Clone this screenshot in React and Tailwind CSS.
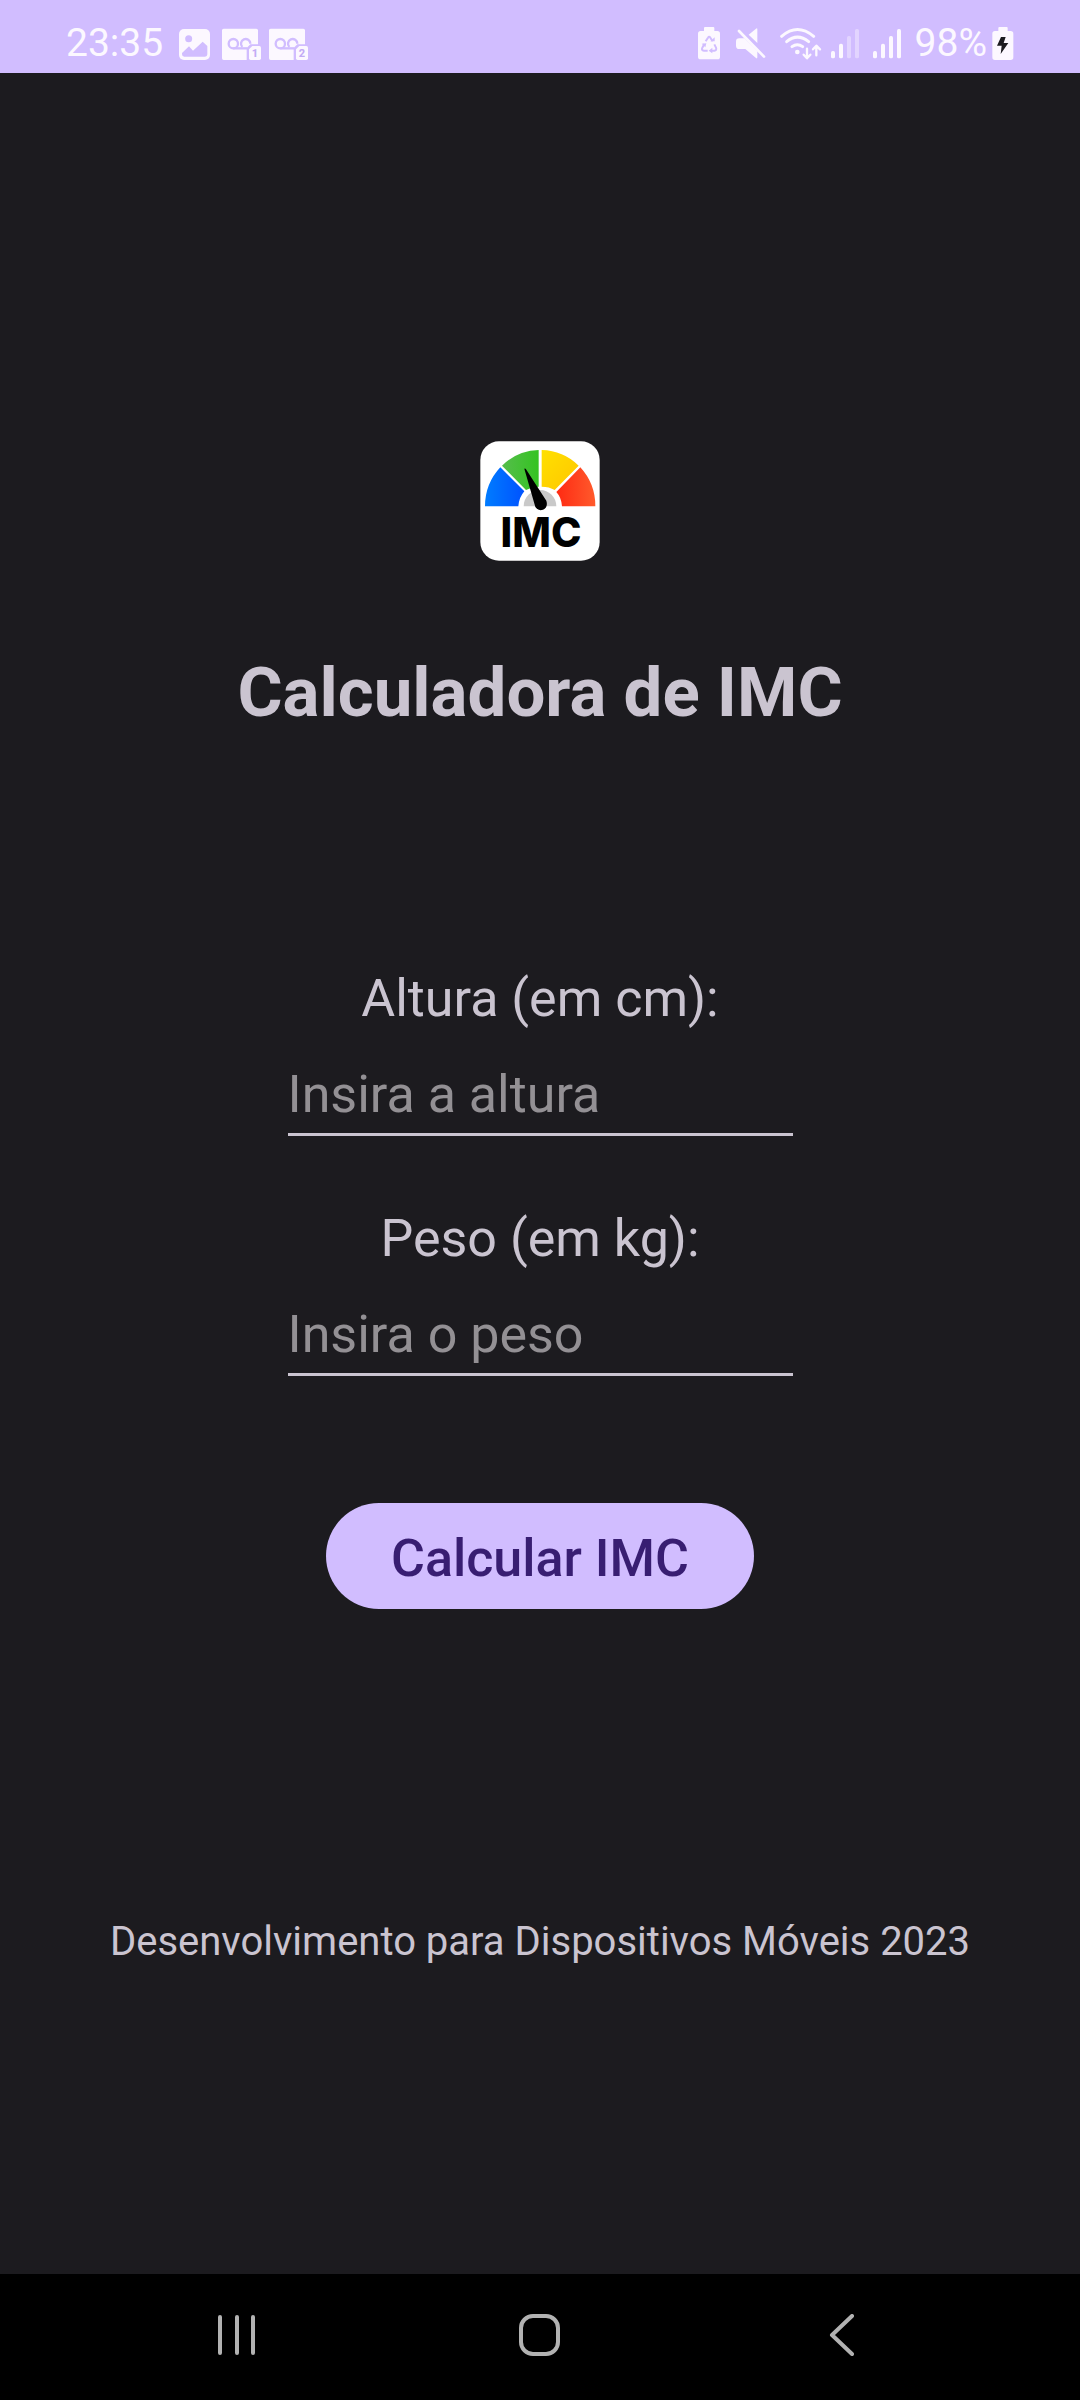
const FG = "#fcf8ff";
const BAR = "#d1bdff";

function PictureIcon() {
  return (
    <svg width="31" height="34" viewBox="387 81 93 102" aria-hidden="true">
      <rect x="387" y="87" width="93" height="93" rx="15" fill={FG} />
      <circle cx="416" cy="116" r="10.5" fill={BAR} />
      <path d="M396 159l21-20 12 13 29-27 14 13v25q0 7-7 7h-62q-7 0-7-7z" fill={BAR} />
    </svg>
  );
}

function VoicemailIcon({ line }) {
  return (
    <svg width="39" height="34" viewBox="516 81 117 102" aria-hidden="true">
      <path d="M521 86h98q5 0 5 5v42h-23l-11 11v36h-69q-5 0-5-5v-84q0-5 5-5z" fill={FG} />
      <g fill="none" stroke={BAR} strokeWidth="7">
        <circle cx="550" cy="131" r="14" />
        <path d="M550 145h42" />
        <path d="M577 141a14 14 0 1 1 24-10" />
      </g>
      <path d="M607 138h21q5 0 5 5v32q0 5-5 5h-26q-5 0-5-5v-27z" fill={FG} />
      <text x="615" y="171" textAnchor="middle" fontFamily="Roboto, sans-serif" fontWeight="800" fontSize="33" fill="#c3abf5">
        {line}
      </text>
    </svg>
  );
}

function RecycleBatteryIcon() {
  return (
    <svg width="22" height="34" viewBox="51 81 66 102" aria-hidden="true">
      <path d="M72 81h25q3 0 3 3v9h9q8 0 8 8v69q0 8-8 8H59q-8 0-8-8v-69q0-8 8-8h10v-9q0-3 3-3z" fill={FG} />
      <g fill="none" stroke={BAR} strokeWidth="6" strokeLinejoin="round">
        <path d="M74 124l7-11q3-5 7 0l7 11" />
        <path d="M100 133l5 10q3 8-5 9h-9" />
        <path d="M80 152H69q-9-1-5-9l6-11" />
      </g>
      <path d="M88 124h13v-12zM94 143v17l-11-8zM62 131l14-1-3 12z" fill={BAR} />
    </svg>
  );
}

function MuteIcon() {
  return (
    <svg width="30" height="34" viewBox="168 81 90 102" aria-hidden="true">
      <path d="M232 88v41l-26-25 22-18q4-3 4 2zM178 115h15l39 38v19q0 5-4 2l-32-27h-18q-10 0-10-10v-12q0-10 10-10z" fill={FG} />
      <path d="M177 93l75 77" stroke={FG} strokeWidth="8" strokeLinecap="round" />
    </svg>
  );
}

function WifiIcon() {
  return (
    <svg width="42" height="34" viewBox="298 81 126 102" aria-hidden="true">
      <g fill="none" stroke={FG} strokeWidth="9" strokeLinecap="round">
        <path d="M303 109q47-41 96 0" />
        <path d="M318 125q32-27 66 0" />
        <path d="M334 140q16-12 32 0" />
      </g>
      <circle cx="350" cy="156" r="7" fill={FG} />
      <g fill="none" stroke={FG} strokeWidth="7" strokeLinecap="round" strokeLinejoin="round">
        <path d="M379 146v28M369 164l10 11 10-11" />
        <path d="M407 166v-28M397 148l10-11 11 11" />
      </g>
    </svg>
  );
}

function SignalIcon({ weak }) {
  return (
    <svg width="28" height="34" viewBox="450 81 84 102" aria-hidden="true">
      <g fill={FG}>
        <rect x="450" y="153" width="12" height="22" rx="5" />
        <rect x="474" y="131" width="12" height="44" rx="5" />
        <rect x="498" y="108" width="12" height="67" rx="5" opacity={weak ? 0.4 : 1} />
        <rect x="522" y="87" width="12" height="88" rx="5" opacity={weak ? 0.4 : 1} />
      </g>
    </svg>
  );
}

function ChargingIcon() {
  return (
    <svg width="22" height="34" viewBox="428 81 66 102" aria-hidden="true">
      <path d="M450 81h22q3 0 3 3v9h9q8 0 8 8v71q0 8-8 8h-47q-8 0-8-8v-71q0-8 8-8h10v-9q0-3 3-3z" fill={FG} />
      <path d="M455 111h14l-6 18h14l-23 33 3-25h-14z" fill="#1c1b20" />
    </svg>
  );
}

function Logo() {
  return (
    <svg width="120" height="120" viewBox="30 33 360 360" role="img" aria-label="IMC">
      <defs>
        <linearGradient id="blue" x1="0" x2="1"><stop stopColor="#007cff" /><stop offset="1" stopColor="#0052ff" /></linearGradient>
        <linearGradient id="green" x1="0" x2="1"><stop stopColor="#56bd4c" /><stop offset="1" stopColor="#34c321" /></linearGradient>
        <linearGradient id="yellow" x1="0" x2="1" y2="1"><stop stopColor="#ffe000" /><stop offset="1" stopColor="#ffc600" /></linearGradient>
        <linearGradient id="red" x1="0" x2="1"><stop stopColor="#ff2a12" /><stop offset="1" stopColor="#ff5a2c" /></linearGradient>
      </defs>
      <rect x="31" y="34" width="358" height="358" rx="56" fill="#fff" />
      <path d="M45 229A165 169 0 0 1 91 112L163 184Q147 202 145 229Z" fill="url(#blue)" />
      <path d="M96 107A165 169 0 0 1 206 60V170Q184 171 168 180Z" fill="url(#green)" />
      <path d="M215 60A165 169 0 0 1 326 107L254 180Q238 170 215 170Z" fill="url(#yellow)" />
      <path d="M331 112A165 169 0 0 1 376 229H276Q274 202 259 186Z" fill="url(#red)" />
      <path d="M161 229a49 49 0 0 1 98 0z" fill="#c9c9c9" />
      <path d="M163 116q3-2 5 2l61 94q6 20-10 27-14 5-23-8z" fill="#000" />
      <text x="213" y="352" textAnchor="middle" fontFamily="Inter, sans-serif" fontWeight="800" fontSize="123" fill="#000">
        IMC
      </text>
    </svg>
  );
}

function StatusBar() {
  return (
    <header className="flex h-[73px] items-end justify-between bg-[#d1bdff] px-[66px] pb-3 text-[#fcf8ff]">
      <div className="flex items-end">
        <time className="text-[39px] leading-9">23:35</time>
        <div className="ml-4 flex gap-2">
          <PictureIcon />
          <div className="ml-1 flex gap-2">
            <VoicemailIcon line="1" />
            <VoicemailIcon line="2" />
          </div>
        </div>
      </div>
      <div className="flex items-end">
        <div className="flex gap-4">
          <RecycleBatteryIcon />
          <MuteIcon />
        </div>
        <div className="ml-[14px]">
          <WifiIcon />
        </div>
        <div className="ml-[9px] flex gap-[14px]">
          <SignalIcon weak />
          <SignalIcon />
        </div>
        <span className="ml-[14px] text-[39px] leading-9">98%</span>
        <div className="ml-[5px]">
          <ChargingIcon />
        </div>
      </div>
    </header>
  );
}

function Field({ id, label, placeholder }) {
  return (
    <div className="flex w-[505px] max-w-full flex-col items-center gap-[34px]">
      <label htmlFor={id} className="text-[52px] leading-[62px]">{label}</label>
      <input
        id={id}
        inputMode="decimal"
        placeholder={placeholder}
        className="h-[72px] w-full border-b-[3px] border-[#cac4d0] bg-transparent pb-[9px] text-[52px] leading-[60px] outline-none placeholder:text-[#939094]"
      />
    </div>
  );
}

function NavBar() {
  return (
    <nav className="flex h-[126px] items-center justify-between bg-black px-[20%] pb-1">
      <button type="button" aria-label="Recentes">
        <svg width="42" height="42" viewBox="0 0 42 42" fill="none" stroke="#b2b2b2" strokeWidth="4" strokeLinecap="round">
          <path d="M4 3v36M21 3v36M37 3v36" />
        </svg>
      </button>
      <button type="button" aria-label="Início">
        <svg width="42" height="42" viewBox="0 0 42 42" fill="none" stroke="#b2b2b2" strokeWidth="4">
          <rect x="2" y="2" width="37" height="38" rx="12" />
        </svg>
      </button>
      <button type="button" aria-label="Voltar">
        <svg width="42" height="42" viewBox="0 0 42 42" fill="none" stroke="#b2b2b2" strokeWidth="4" strokeLinecap="round" strokeLinejoin="round">
          <path d="M30 2L10 21l20 19" />
        </svg>
      </button>
    </nav>
  );
}

export default function App() {
  return (
    <div className="flex min-h-screen flex-col bg-[#1c1b1f] font-[Roboto,sans-serif] text-[#cac4d0]">
      <StatusBar />
      <main className="flex flex-1 flex-col items-center pt-[368px]">
        <Logo />
        <h1 className="mt-[92px] text-[69px] leading-[80px] font-bold">Calculadora de IMC</h1>
        <form className="mt-[235px] flex flex-col items-center" onSubmit={(e) => e.preventDefault()}>
          <div className="flex flex-col gap-[72px]">
            <Field id="altura" label="Altura (em cm):" placeholder="Insira a altura" />
            <Field id="peso" label="Peso (em kg):" placeholder="Insira o peso" />
          </div>
          <button type="submit" className="mt-[127px] rounded-full bg-[#d1bdff] px-[65px] pt-[26px] pb-5 text-[52px] leading-[60px] font-medium text-[#381e72]">
            Calcular IMC
          </button>
        </form>
        <p className="mt-[308px] text-[40px] leading-[50px]">Desenvolvimento para Dispositivos Móveis 2023</p>
      </main>
      <NavBar />
    </div>
  );
}
